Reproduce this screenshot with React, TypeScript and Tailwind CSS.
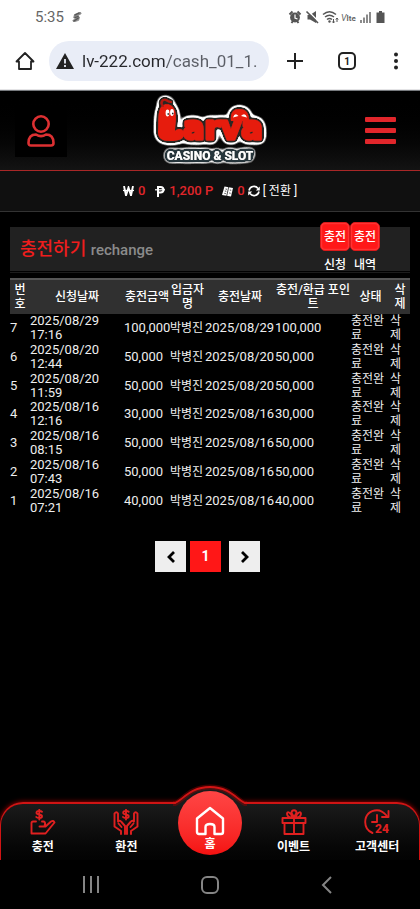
import React from "react";

const rows = [
  { no: 7, requested: "2025/08/29 17:16", amount: "100,000", charged: "2025/08/29", point: "100,000" },
  { no: 6, requested: "2025/08/20 12:44", amount: "50,000", charged: "2025/08/20", point: "50,000" },
  { no: 5, requested: "2025/08/20 11:59", amount: "50,000", charged: "2025/08/20", point: "50,000" },
  { no: 4, requested: "2025/08/16 12:16", amount: "30,000", charged: "2025/08/16", point: "30,000" },
  { no: 3, requested: "2025/08/16 08:15", amount: "50,000", charged: "2025/08/16", point: "50,000" },
  { no: 2, requested: "2025/08/16 07:43", amount: "50,000", charged: "2025/08/16", point: "50,000" },
  { no: 1, requested: "2025/08/16 07:21", amount: "40,000", charged: "2025/08/16", point: "40,000" },
];

function StatusBar() {
  return (
    <div className="flex h-[33px] items-center bg-white pr-[34px] pl-[35px] text-[#666]">
      <span className="text-[15px] leading-5">5:35</span>
      <svg className="ml-2 size-[10px]" viewBox="0 0 12 12" aria-hidden="true">
        <path d="M3 3 L10 0 L11 2 L6 5 L9 6 L8 10 L2 12 L1 10 L5 8 L2 7 Z" fill="#888" stroke="#888" />
        <path d="M3 4 L9 1 M3 7 L8 5 M2 11 L8 7" stroke="#555" strokeWidth="1.4" />
      </svg>
      <svg className="ml-auto h-[14px] w-[98px]" viewBox="0 0 98 14" fill="none" aria-hidden="true">
        <circle cx="7" cy="7.500" r="4.900" fill="#555" />
        <path d="M1.500 4.500 L4.500 1.500 M12.500 4.500 L9.500 1.500 M3.500 13 L5 11 M10.500 13 L9 11" stroke="#555" strokeWidth="2" />
        <path d="M7 4.500 V8 L9.500 9" stroke="#fff" strokeWidth="1.200" />
        <path d="M19.500 5 H22 L28 1 V13 L22 9.500 H19.500 Z" fill="#555" />
        <path d="M19.500 0.500 L31 12" stroke="#fff" strokeWidth="1.500" />
        <path d="M18.500 1.500 L30 13" stroke="#555" strokeWidth="1.600" />
        <path d="M35 4.500 Q41.500 -1 48 4.500 M37 7 Q41.500 3.400 46 7 M39 9.500 Q41.500 7.500 44 9.500" stroke="#555" strokeWidth="1.500" />
        <circle cx="41.500" cy="11.500" r="1.200" fill="#555" />
        <path d="M45.500 9 V13 M44.300 11.500 L45.500 13 L46.700 11.500 M49 12 V8 M47.800 9.500 L49 8 L50.200 9.500" stroke="#555" />
        <text x="53" y="11" fontSize="9" fill="#666">
          <tspan fontStyle="italic">V</tspan>
          <tspan fontWeight="700" fontSize="8">lte</tspan>
        </text>
        <path d="M73 10 V13 M76 7.500 V13 M79 4.500 V13 M82 2 V13" stroke="#666" strokeWidth="1.500" />
        <path d="M91 1 H94 V2.500 H96.500 V13 H88.500 V2.500 H91 Z" fill="#555" />
      </svg>
    </div>
  );
}

function BrowserBar() {
  return (
    <div className="flex h-[57px] items-center border-b border-[#e4e4e6] bg-white pr-4 pl-[15px] text-[#222]">
      <button type="button" aria-label="홈페이지">
        <svg className="size-5" viewBox="0 0 20 20" fill="none" stroke="currentColor" strokeWidth="1.800" strokeLinejoin="round">
          <path d="M1.500 10.500 L10 2 L18.500 10.500 H16 V18 H4 V10.500 Z" />
        </svg>
      </button>
      <label className="ml-[14px] flex h-10 min-w-0 flex-1 items-center rounded-full bg-[#e9edf7] pr-1 pl-[7px]">
        <svg className="size-[18px] shrink-0" viewBox="0 0 18 18" aria-hidden="true">
          <path d="M9 1 L18 17 H0 Z" fill="#222" />
          <path d="M9 7 V11.500 M9 13 V15" stroke="#e9edf7" strokeWidth="1.800" />
        </svg>
        <input
          type="text"
          aria-label="주소"
          defaultValue="lv-222.com/cash_01_1."
          className="ml-2 w-full min-w-0 bg-linear-to-r from-[#26272b] from-[84px] to-[#5b5e66] to-[85px] bg-clip-text text-[17px] leading-6 text-transparent outline-none"
        />
      </label>
      <button type="button" aria-label="새 탭" className="ml-[17px]">
        <svg className="size-[18px]" viewBox="0 0 18 18" stroke="currentColor" strokeWidth="2">
          <path d="M9 1 V17 M1 9 H17" />
        </svg>
      </button>
      <button type="button" className="ml-[34px] flex size-[18px] items-center justify-center rounded-[5px] border-2 border-[#222] text-[10px] font-bold">
        1
      </button>
      <button type="button" aria-label="메뉴 더보기" className="ml-8">
        <svg className="h-[18px] w-4" viewBox="0 0 16 18" fill="currentColor">
          <circle cx="8" cy="2.500" r="2" />
          <circle cx="8" cy="9" r="2" />
          <circle cx="8" cy="15.500" r="2" />
        </svg>
      </button>
    </div>
  );
}

function OutlineFilter({ id, inner, outer, color }: { id: string; inner: number; outer: number; color: string }) {
  return (
    <filter id={id} x="-20%" y="-60%" width="140%" height="220%">
      <feGaussianBlur in="SourceAlpha" stdDeviation={outer} result="wideBlur" />
      <feComponentTransfer in="wideBlur" result="wide">
        <feFuncA type="linear" slope="14" intercept="-0.6" />
      </feComponentTransfer>
      <feFlood floodColor="#fff" />
      <feComposite in2="wide" operator="in" result="white" />
      <feGaussianBlur in="SourceAlpha" stdDeviation={inner} result="thinBlur" />
      <feComponentTransfer in="thinBlur" result="thin">
        <feFuncA type="linear" slope="14" intercept="-0.6" />
      </feComponentTransfer>
      <feFlood floodColor={color} />
      <feComposite in2="thin" operator="in" result="dark" />
      <feMerge>
        <feMergeNode in="white" />
        <feMergeNode in="dark" />
        <feMergeNode in="SourceGraphic" />
      </feMerge>
    </filter>
  );
}

function Logo() {
  return (
    <svg className="h-[74px] w-[120px] overflow-visible" viewBox="0 0 120 74" role="img" aria-label="Larva Casino & Slot">
      <defs>
        <OutlineFilter id="mascotOutline" inner={1.4} outer={3.2} color="#2a2523" />
        <OutlineFilter id="bannerOutline" inner={1.9} outer={3} color="#27343a" />
      </defs>
      <g filter="url(#mascotOutline)" fill="#e61c08">
        <path d="M81 27 C80 18 84 15 89 15 C96 15 99 19 99 27 Z" />
        <path d="M12 12 C17 8 23 11 25 17 C27 25 25 30 25 37 C30 33 34 36 34 40 C34 45 29 47 20 47 C12 47 8 44 8 38 C9 29 7 17 12 12 Z" />
        <path d="M13 12 C10 9 12 5 16 6 C18 7 19 8 21 8" fill="none" stroke="#b51508" strokeWidth="2" strokeLinecap="round" />
        <text x="33" y="45" fontSize="32" fontWeight="700" fontFamily="'DejaVu Sans', sans-serif" stroke="#e61c08" strokeWidth="3" strokeLinejoin="round">
          arva
        </text>
      </g>
      <g fill="#fff">
        <ellipse cx="17.500" cy="19" rx="1.900" ry="3.400" />
        <ellipse cx="22" cy="18.500" rx="1.900" ry="3.400" />
        <path d="M83 23.500 Q85 18 88.500 22 Z M91 22 Q95 18 97 23.500 Z" />
      </g>
      <path d="M17.500 20 H19 M22 19.500 H23.500" stroke="#222" strokeWidth="1.500" />
      <g filter="url(#bannerOutline)">
        <text x="60" y="66" fill="#fff" fontSize="12" fontWeight="800" fontFamily="Roboto, sans-serif" textAnchor="middle">
          CASINO &amp; SLOT
        </text>
      </g>
    </svg>
  );
}

function SiteHeader() {
  return (
    <header>
      <div className="grid h-[81px] grid-cols-[1fr_auto_1fr] items-center border-t border-b border-t-[#777a7e] border-b-[#a92727] bg-linear-to-b from-black to-[#131313] pr-6 pl-[15px]">
        <button type="button" aria-label="내 정보" className="flex size-[52px] items-center justify-center bg-black">
          <svg className="h-8 w-7" viewBox="0 0 28 32" fill="none" stroke="#dd3032" strokeWidth="2.600" strokeLinejoin="round">
            <circle cx="14" cy="9" r="7.700" />
            <path d="M9 19.500 C12 21.500 16 21.500 19 19.500 C24 19.500 26.500 23 26.500 28 Q26.500 30.500 24 30.500 H4 Q1.500 30.500 1.500 28 C1.500 23 4 19.500 9 19.500 Z" />
          </svg>
        </button>
        <a href="#home" className="ml-[9px]">
          <Logo />
        </a>
        <button type="button" aria-label="메뉴" className="flex w-[31px] flex-col gap-[6px] justify-self-end">
          <span className="h-[5px] rounded-[1px] bg-[#e1262b]" />
          <span className="h-[5px] rounded-[1px] bg-[#e1262b]" />
          <span className="h-[5px] rounded-[1px] bg-[#e1262b]" />
        </button>
      </div>
      <div className="flex h-[41px] items-center justify-center border-b border-[#333] bg-[#101010] text-[13px] font-medium text-white">
        <svg className="h-[10px] w-[11px]" viewBox="0 0 11 10" fill="none" stroke="#fff" role="img" aria-label="원">
          <path d="M1 0 L3 9.500 L5.500 1.500 L8 9.500 L10 0" strokeWidth="1.900" />
          <path d="M0 4.500 H11" strokeWidth="1.200" />
        </svg>
        <span className="ml-1 text-[#e1262b]">0</span>
        <svg className="ml-[10px] h-[11px] w-[10px]" viewBox="0 0 10 11" fill="none" stroke="#fff" role="img" aria-label="포인트">
          <path d="M3 11 V1 H5.500 Q8.500 1 8.500 3.800 Q8.500 6.500 5.500 6.500 H3" strokeWidth="2" />
          <path d="M0 3.800 H10" strokeWidth="1.200" />
        </svg>
        <span className="ml-1 text-[#e1262b]">1,200 P</span>
        <svg className="ml-[9px] h-[11px] w-[11px]" viewBox="0 0 11 11" aria-hidden="true">
          <path d="M2.500 0.500 L11 2 L9 10.500 L0 9 Z" fill="#fff" />
          <path d="M6.700 1 L4.700 10 M3.500 3 L5 3.300 M2.800 5 L4.300 5.300 M2.300 7.300 L3.800 7.600 M7.800 4 L9.200 4.300 M7.200 7 L8.600 7.300" stroke="#222" strokeWidth="0.800" />
        </svg>
        <span className="ml-1 text-[#e1262b]">0</span>
        <button type="button" className="ml-[3px] flex items-center gap-[3px] font-normal">
          <svg className="size-3" viewBox="0 0 12 12" fill="none" stroke="#fff" strokeWidth="1.600" aria-hidden="true">
            <path d="M1 5.500 A5 5 0 0 1 10 3.500 M11 6.500 A5 5 0 0 1 2 8.500" />
            <path d="M11.800 1.500 V5.500 H7.800 Z M0.200 10.500 V6.500 H4.200 Z" fill="#fff" stroke="none" />
          </svg>
          <span className="text-[12px]">[ 전환 ]</span>
        </button>
      </div>
    </header>
  );
}

function TitleButton({ label }: { label: string }) {
  return (
    <button type="button" className="flex w-[30px] flex-col items-center gap-2 text-[12px] leading-3 font-medium text-white">
      <span className="flex h-[29px] w-full items-center justify-center rounded-[5px] border border-[#d91a1a] bg-[#ff1818] shadow-[inset_0_0_2px_#ff8080]">
        충전
      </span>
      <span>{label}</span>
    </button>
  );
}

function ChargeTable() {
  return (
    <table className="mt-[5px] h-[237px] w-full table-fixed border-collapse text-left text-[12px] leading-[14px] text-[#eee]">
      <colgroup>
        <col className="w-[20px]" />
        <col className="w-[94px]" />
        <col className="w-[46px]" />
        <col className="w-[35px]" />
        <col className="w-[70px]" />
        <col className="w-[76px]" />
        <col className="w-[39px]" />
        <col className="w-[20px]" />
      </colgroup>
      <thead>
        <tr className="h-[35px] border-t-2 border-[#555] bg-[#303030] text-center text-white">
          {["번호", "신청날짜", "충전금액", "입금자명", "충전날짜", "충전/환급 포인트", "상태", "삭제"].map((h) => (
            <th key={h} scope="col" className="p-0 font-medium">
              {h}
            </th>
          ))}
        </tr>
      </thead>
      <tbody>
        {rows.map((r) => (
          <tr key={r.no}>
            <td className="p-0 text-[13px]">{r.no}</td>
            <td className="p-0 text-[13px]">{r.requested}</td>
            <td className="p-0 text-[13px]">{r.amount}</td>
            <td className="p-0 whitespace-nowrap">박병진</td>
            <td className="p-0 text-[13px]">{r.charged}</td>
            <td className="p-0 text-[13px]">{r.point}</td>
            <td className="p-0">충전완료</td>
            <td className="p-0">
              <button type="button" className="block w-full text-left">삭제</button>
            </td>
          </tr>
        ))}
      </tbody>
    </table>
  );
}

function Pagination() {
  return (
    <nav aria-label="페이지" className="mt-[26px] flex justify-center pr-[5px]">
      <button type="button" aria-label="이전" className="flex size-[31px] items-center justify-center bg-[#eee]">
        <svg className="h-3 w-2" viewBox="0 0 8 12" fill="none" stroke="#000" strokeWidth="2.800">
          <path d="M7 1 L2 6 L7 11" />
        </svg>
      </button>
      <button type="button" aria-current="page" className="ml-1 flex size-[31px] items-center justify-center bg-[#ff1717] text-[14px] font-bold text-white">
        1
      </button>
      <button type="button" aria-label="다음" className="ml-2 flex size-[31px] items-center justify-center bg-[#eee]">
        <svg className="h-3 w-2" viewBox="0 0 8 12" fill="none" stroke="#000" strokeWidth="2.800">
          <path d="M1 1 L6 6 L1 11" />
        </svg>
      </button>
    </nav>
  );
}

function NavItem({ label, children }: { label: string; children: React.ReactNode }) {
  return (
    <a href={"#" + label} className="flex flex-1 flex-col items-center pt-[5px] text-[12px] leading-4 font-bold text-white">
      <svg className="mb-[4px] size-[26px]" viewBox="0 0 26 26" fill="none" stroke="#e02020" strokeWidth="1.900" strokeLinejoin="round" strokeLinecap="round" aria-hidden="true">
        {children}
      </svg>
      {label}
    </a>
  );
}

const dollar = "M12 2.800 C11 1.500 6.500 1.300 6.500 3.700 C6.500 6 12 5 12 7.300 C12 9.700 7.500 9.500 6.300 8 M9.300 0.800 V10.500";

function BottomNav() {
  return (
    <nav aria-label="하단 메뉴" className="relative flex h-[58px] rounded-t-[23px] border-x border-t-2 border-[#d01414] bg-linear-to-b from-[#1b1b1b] to-[#030303] shadow-[0_0_5px_#b00000]">
      <svg className="absolute -top-[22px] left-1/2 h-[24px] w-[80px] -translate-x-1/2" viewBox="0 0 80 24" fill="none" aria-hidden="true">
        <path d="M6 21.500 C13 16 20 5 40 5 C60 5 67 16 74 21.500 V24 H6 Z" fill="#1b1b1b" />
        <path d="M3 21.500 H5 C13 18 20 5 40 5 C60 5 67 18 75 21.500 H77" stroke="#a00000" strokeOpacity="0.400" strokeWidth="5" />
        <path d="M3 21 H5 C13 18 20 5 40 5 C60 5 67 18 75 21 H77" stroke="#d01414" strokeWidth="1.800" />
      </svg>
      <NavItem label="충전">
        <path d={dollar} />
        <path d="M6 12.500 H3 Q1.500 12.500 1.500 14 V24.500 H15.500 L24.500 13.500 Q23.500 11 21 12.500 L15.500 17.500 H9.500 M12 12.500 H14 Q16 14 14.500 17" />
      </NavItem>
      <NavItem label="환전">
        <path d={dollar} transform="translate(3.700 0)" />
        <path d="M8 25 V22 L1.500 17.500 V4.500 Q3.500 2 5 4.500 V12.500 Q7 11 8.500 13 L12 17 V25 M5.500 14.500 L8.500 18 M18 25 V22 L24.500 17.500 V4.500 Q22.500 2 21 4.500 V12.500 Q19 11 17.500 13 L14 17 V25 M20.500 14.500 L17.500 18" />
      </NavItem>
      <div className="flex flex-1 justify-center">
        <a href="#home" className="relative -mt-[13px] flex size-16 shrink-0 flex-col items-center rounded-full bg-linear-to-b from-[#ff4545] to-[#f51010] pt-[15px] text-[12px] leading-4 font-bold text-white">
          <svg className="size-[30px]" viewBox="0 0 30 30" fill="none" stroke="#fff" strokeWidth="2.400" strokeLinejoin="round" aria-hidden="true">
            <path d="M15 2 L28 12.500 V26 Q28 28 26 28 H19.500 V21 Q19.500 18 15 18 Q10.500 18 10.500 21 V28 H4 Q2 28 2 26 V12.500 Z" />
          </svg>
          홈
        </a>
      </div>
      <NavItem label="이벤트">
        <path d="M1.500 9 H24.500 V14 H1.500 Z M3.500 14 V25 H22.500 V14 M13 9 V25 M11 8.500 C5 8.500 5 2 8 3.500 Q11 5 11 8.500 M15 8.500 C21 8.500 21 2 18 3.500 Q15 5 15 8.500 M10.500 4 Q10.500 1.200 13 1.200 Q15.500 1.200 15.500 4 L13 8 Z" />
      </NavItem>
      <NavItem label="고객센터">
        <path d="M8.500 24 C2.500 21.500 1.200 17 1.200 13 C1.200 6 6 1.200 13 1.200 Q18 1.200 22.500 6.500 M24.500 2 V8 H18 M13 6 V13 H8" />
        <text x="11" y="24" fontSize="12" fontWeight="800" fill="#e02020" stroke="none">24</text>
      </NavItem>
    </nav>
  );
}

function SystemNav() {
  return (
    <div className="relative flex h-[49px] items-center justify-around bg-black px-8 text-[#858585]">
      <button type="button" aria-label="최근 앱" className="flex w-4 justify-between">
        <span className="h-[17px] w-[2px] bg-current" />
        <span className="h-[17px] w-[2px] bg-current" />
        <span className="h-[17px] w-[2px] bg-current" />
      </button>
      <button type="button" aria-label="홈 화면" className="size-[18px] rounded-[6px] border-2 border-current" />
      <button type="button" aria-label="뒤로" className="flex w-4 justify-start">
        <svg className="h-[18px] w-[11px]" viewBox="0 0 11 18" fill="none" stroke="currentColor" strokeWidth="2">
          <path d="M10 1 L2 9 L10 17" />
        </svg>
      </button>
    </div>
  );
}

export default function App() {
  return (
    <div className="flex min-h-screen flex-col bg-black font-[Roboto,'Noto_Sans_CJK_KR',sans-serif]">
      <StatusBar />
      <BrowserBar />
      <SiteHeader />
      <main className="flex-1 px-[10px] pt-[15px]">
        <div className="border-b border-[#1c1c1c] pb-[1px]">
          <div className="flex h-11 items-end justify-between bg-[#212121] pr-[30px] pl-[10px]">
            <h1 className="self-center text-[18px] leading-6 font-medium text-[#ef1d1d]">
              충전하기 <span className="text-[15px] text-[#8b8b8b]">rechange</span>
            </h1>
            <div className="flex">
              <TitleButton label="신청" />
              <TitleButton label="내역" />
            </div>
          </div>
        </div>
        <ChargeTable />
        <Pagination />
      </main>
      <BottomNav />
      <SystemNav />
    </div>
  );
}
